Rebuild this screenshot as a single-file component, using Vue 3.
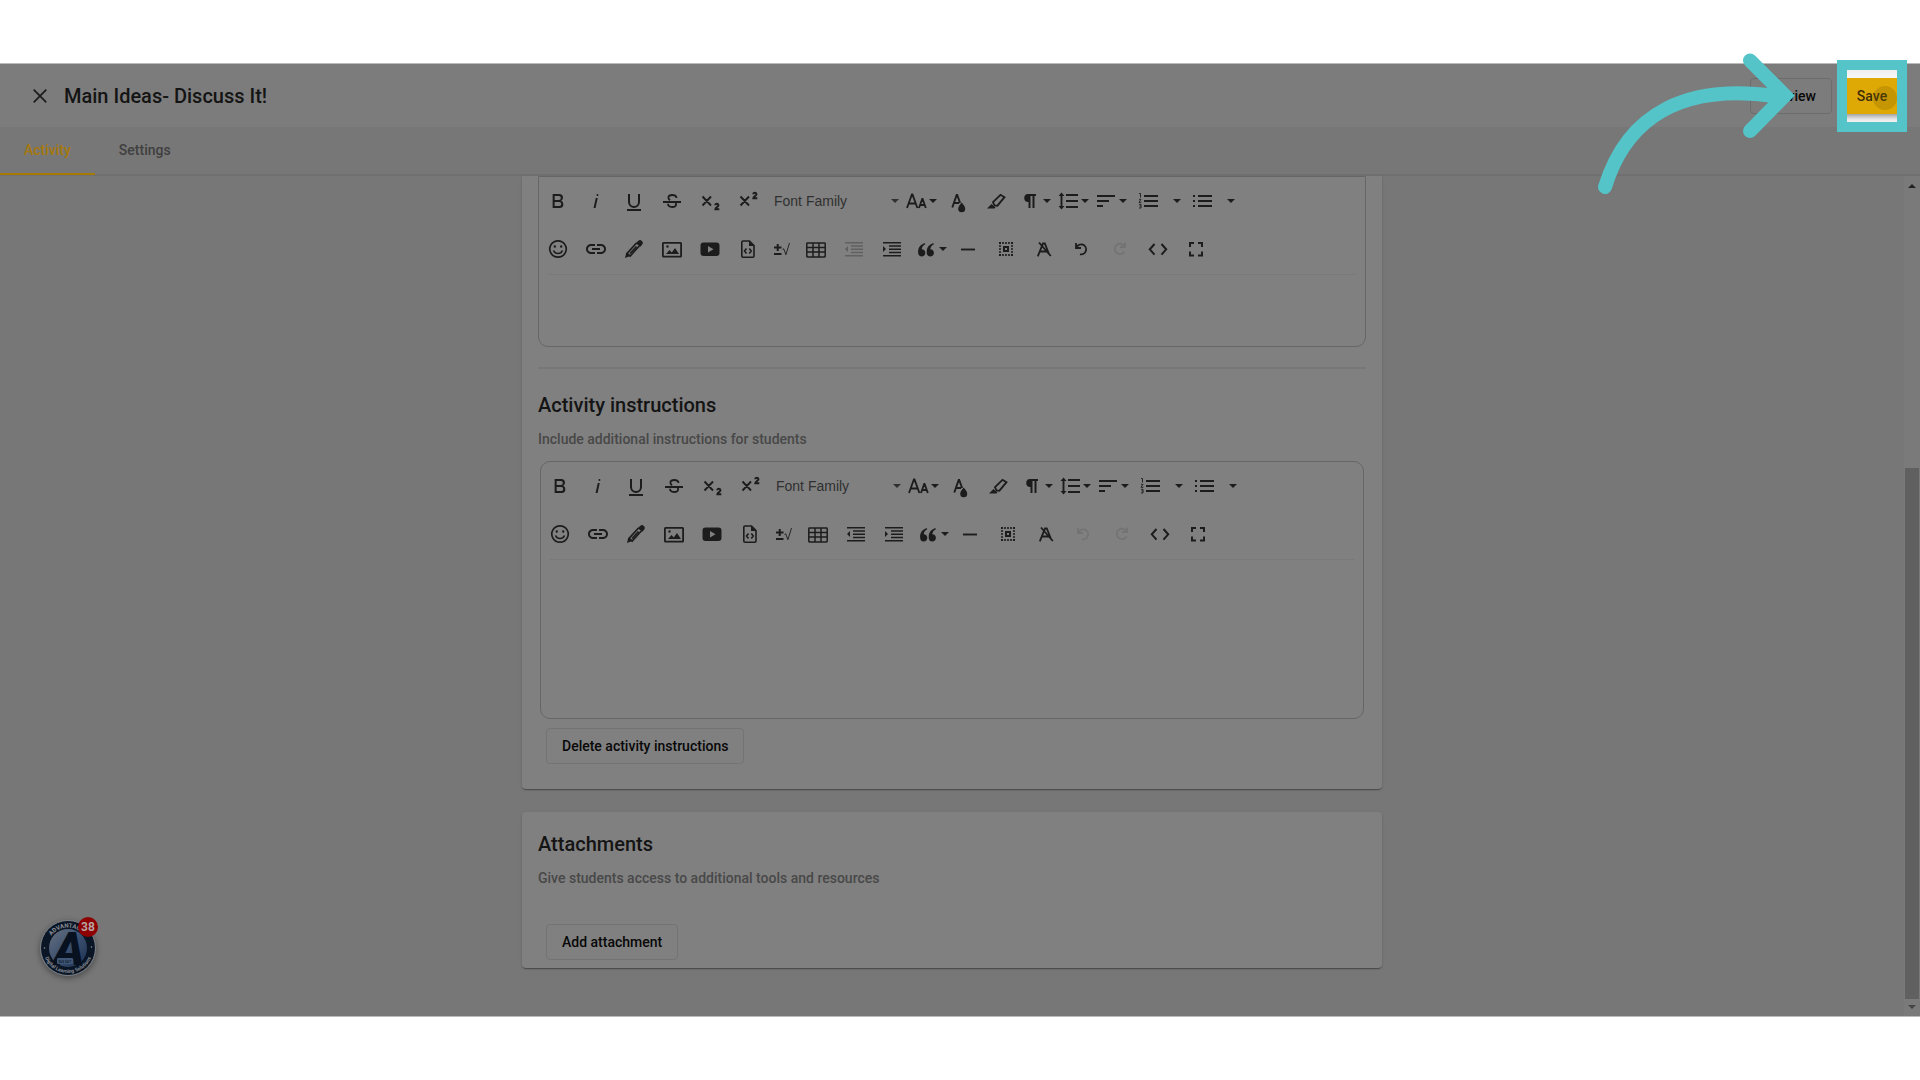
<script setup>
import { ref } from 'vue';

const activeTab = ref('Activity');
const tabs = ['Activity', 'Settings'];

// f = filled path, s = stroked path, w = stroke width
const icons = {
    bold: { f: 'M15.25 11.8A3.68 3.68 0 0 0 17 9a3.93 3.93 0 0 0-3.86-4H6.65v14h7a3.74 3.74 0 0 0 3.7-3.78a3.64 3.64 0 0 0-2.1-3.42zM8.65 7h4.2a2 2 0 0 1 0 4h-4.2zM13.25 17h-4.6v-4h4.6a2 2 0 0 1 0 4z' },
    italic: { f: 'M11.76 9h2l-2.2 10h-2zM13.44 5a1 1 0 1 0 1 1a1 1 0 0 0-1-1z' },
    underline: { s: 'M7 5v8a5 5 0 0 0 10 0V5M5 21h14', w: 2 },
    strike: { s: 'M3 13h18M16.5 9C16.4 7 14.8 6 12.2 6C9.8 6 8.4 7.2 8.4 8.8c0 1 .6 1.8 1.6 2.4M8 14.8c0 2 1.8 3.2 4.2 3.2s3.9-1.1 3.9-2.8c0-.7-.2-1.2-.6-1.7', w: 1.8 },
    sub: { s: 'M4.5 7.5l8.5 9M13 7.5l-8.5 9M17.3 16.2c0-2 3.2-1.7 3.2 0c0 1.3-3.2 2.3-3.2 4h4', w: 1.9 },
    sup: { s: 'M4.5 7.5l8.5 9M13 7.5l-8.5 9M17.3 5.2c0-2 3.2-1.7 3.2 0c0 1.3-3.2 2.3-3.2 4h4', w: 1.9 },
    size: { s: 'M3 19L7.9 5.5h.6L13.4 19M4.8 14.5h6.8M15 19l3.2-9h.4l3.2 9M16.3 16h4.2', w: 1.8 },
    color: { f: 'M15.7 13.5c2 2.5 3.5 4.3 3.5 6.2a3.5 3.5 0 0 1-7 0c0-1.9 1.5-3.7 3.5-6.2z', s: 'M6.3 18.5L10.7 6h.5l2.9 8M8 14h5', w: 1.9 },
    marker: { f: 'M3 19.5l4.5-4.5l4 3.5l-1 1z', s: 'M9 13.2L16.5 5.8l4 2.4L13.4 16.7L10.5 16.5z', w: 1.8 },
    paragraph: { f: 'M10 5h8v2h-1.5v12h-2V7H12.5v12h-2v-6A4 4 0 0 1 10 5z' },
    lineHeight: { f: 'M5.5 3.5l3 3.5h-6zM5.5 20.5l3-3.5h-6z', s: 'M5.5 6v12M10 6h12M10 12h12M10 18h12', w: 1.9 },
    align: { s: 'M3 7h18M3 12h12M3 17h6', w: 2 },
    ol: { s: 'M8 7h14M8 12h14M8 17h14', w: 2, x: 'M3 4.5h1.5v4M3 10.3h2l-2 3h2.4M3 15.3h2v3.700H3M3.5 17h1.500' },
    ul: { s: 'M8 7h14M8 12h14M8 17h14M3 7h2M3 12h2M3 17h2', w: 2 },
    smile: { f: 'M7.6 9.5a1.2 1.2 0 1 0 2.4 0a1.2 1.2 0 1 0-2.4 0M14 9.5a1.2 1.2 0 1 0 2.4 0a1.2 1.2 0 1 0-2.4 0', s: 'M12 3.8a8.2 8.2 0 1 0 .01 0M7.5 13.5c1.8 4 7.2 4 9 0', w: 1.7 },
    link: { f: 'M3.9 12c0-1.71 1.39-3.1 3.1-3.1h4V7H7c-2.76 0-5 2.24-5 5s2.24 5 5 5h4v-1.9H7c-1.71 0-3.1-1.39-3.1-3.1zM8 13h8v-2H8v2zm9-6h-4v1.9h4c1.71 0 3.1 1.39 3.1 3.1s-1.39 3.1-3.1 3.1h-4V17h4c2.76 0 5-2.24 5-5s-2.24-5-5-5z' },
    pencil: { f: 'M15.5 4.5c1.2-1.3 2.3-1.9 3.6-1c1.6 1 2.3 2.4 1.2 4l-2 2.3l-4.6-3.6zM3 21l1.3-5.3l4 3.3z', s: 'M14.5 6L5 16.3l3.2 2.7l9.5-10.5M8 16.5l6.5-7', w: 1.7 },
    image: { f: 'M6 17l3.5-4l2.3 2.5L15 11l4 6zM6.3 9.5a1.2 1.2 0 1 0 2.4 0a1.2 1.2 0 1 0-2.4 0', s: 'M3.5 5.9h17c.4 0 .6.2.6.6v12.5c0 .4-.2.6-.6.6h-17c-.4 0-.6-.2-.6-.6V6.5c0-.4.2-.6.6-.6z', w: 1.8 },
    video: { f: 'M5.5 5.5h13a3 3 0 0 1 3 3v7.5a3 3 0 0 1-3 3h-13a3 3 0 0 1-3-3V8.5a3 3 0 0 1 3-3zM10 9v6.5l5.5-3.25z' },
    file: { f: 'M13 4l5 5h-5z', s: 'M7 4h6.5l4.5 4.5V19c0 .8-.4 1.2-1.2 1.2H7c-.8 0-1.2-.4-1.2-1.2V5.2C5.8 4.4 6.2 4 7 4zM10.5 11.5L8.5 14l2 2.5M13.3 11.5l2 2.5l-2 2.5', w: 1.6 },
    math: { s: 'M4 10.5h7.5M7.7 7v7M4 17h7.5', w: 2, x: 'M12.5 12.5l1.2-.8l2.2 6L19.5 6' },
    table: { s: 'M3.5 6h17q.7 0 .7.7v12.6q0 .7-.7.7h-17q-.7 0-.7-.7V6.7q0-.7.7-.7zM3 10.5h18M3 15h18M9 6v14M15 6v14', w: 1.5 },
    outdent: { f: 'M6 9v6l-3-3z', s: 'M3 5.7h18M9 9h12M9 12.2h12M9 15.5h12M3 18.8h18', w: 1.6 },
    indent: { f: 'M3 9v6l3-3z', s: 'M3 5.7h18M9 9h12M9 12.2h12M9 15.5h12M3 18.8h18', w: 1.6 },
    quote: { f: 'M10.8 6l.4 1.3C9 8.6 8 10 7.7 12.2c2.2 0 3.6 1.5 3.6 3.6c0 2.2-1.5 3.7-3.6 3.7c-2.3 0-3.6-1.6-3.6-4.6C4.1 10.5 6.5 7.5 10.8 6zM19.4 6l.4 1.3c-2.2 1.3-3.2 2.7-3.5 4.9c2.2 0 3.6 1.5 3.6 3.6c0 2.2-1.5 3.7-3.6 3.7c-2.3 0-3.6-1.6-3.6-4.6C12.7 10.5 15.1 7.5 19.4 6z' },
    line: { s: 'M5 12.5h14', w: 1.9 },
    selectAll: { f: 'M5 5h2v2H5zM8.2 5h1.6v2H8.2zM11.2 5h1.6v2h-1.6zM14.2 5h1.6v2h-1.6zM17 5h2v2h-2zM5 8.2h2v1.6H5zM5 11.2h2v1.6H5zM5 14.2h2v1.6H5zM5 17h2v2H5zM8.2 17h1.6v2H8.2zM11.2 17h1.6v2h-1.6zM14.2 17h1.6v2h-1.6zM17 17h2v2h-2zM17 8.2h2v1.6h-2zM17 11.2h2v1.6h-2zM17 14.2h2v1.6h-2z', s: 'M10 10h4v4h-4z', w: 2 },
    clear: { s: 'M5.8 19.3L11 6.5h1.8L17 17M8 14.5h7M7 5.5L18.8 19', w: 1.8 },
    undo: { s: 'M6 6v5h5M6.5 10.5A5 5 0 1 1 10 17.3', w: 1.8 },
    redo: { s: 'M17 5.5V10h-5M16.6 9.5A5.2 5.2 0 1 0 16.5 14.5', w: 1.8 },
    code: { s: 'M8.5 7L3.8 12.3l4.7 5.3M15.5 7l4.7 5.3l-4.7 5.3', w: 2 },
    full: { s: 'M6 10V6h4M14 6h4v4M18 14.5v4h-4M10 18.5H6v-4', w: 2 },
};

const rowOne = [
    { icon: 'bold', label: 'Bold' },
    { icon: 'italic', label: 'Italic' },
    { icon: 'underline', label: 'Underline' },
    { icon: 'strike', label: 'Strikethrough' },
    { icon: 'sub', label: 'Subscript' },
    { icon: 'sup', label: 'Superscript' },
    { text: 'Font Family', label: 'Font Family', drop: true },
    { icon: 'size', label: 'Font Size', drop: true },
    { icon: 'color', label: 'Text Color' },
    { icon: 'marker', label: 'Background Color' },
    { icon: 'paragraph', label: 'Paragraph Format', drop: true },
    { icon: 'lineHeight', label: 'Line Height', drop: true },
    { icon: 'align', label: 'Align', drop: true },
    { icon: 'ol', label: 'Ordered List' },
    { caret: true, label: 'Ordered List options' },
    { icon: 'ul', label: 'Unordered List' },
    { caret: true, label: 'Unordered List options' },
];

const rowTwo = [
    { icon: 'smile', label: 'Emoticons' },
    { icon: 'link', label: 'Insert Link' },
    { icon: 'pencil', label: 'Draw' },
    { icon: 'image', label: 'Insert Image' },
    { icon: 'video', label: 'Insert Video' },
    { icon: 'file', label: 'Embed File' },
    { icon: 'math', label: 'Math', narrow: true },
    { icon: 'table', label: 'Insert Table' },
    { icon: 'outdent', label: 'Decrease Indent' },
    { icon: 'indent', label: 'Increase Indent' },
    { icon: 'quote', label: 'Quote', drop: true },
    { icon: 'line', label: 'Horizontal Line' },
    { icon: 'selectAll', label: 'Select All' },
    { icon: 'clear', label: 'Clear Formatting' },
    { icon: 'undo', label: 'Undo' },
    { icon: 'redo', label: 'Redo' },
    { icon: 'code', label: 'Code View' },
    { icon: 'full', label: 'Fullscreen' },
];

const editors = [
    { id: 'details', label: 'Activity details', muted: ['outdent'], off: ['redo'] },
    { id: 'instructions', label: 'Activity instructions', muted: [], off: ['undo', 'redo'] },
];

function toolClass(tool, editor) {
    return {
        drop: tool.drop,
        family: tool.text,
        split: tool.caret,
        narrow: tool.narrow,
        muted: editor.muted.includes(tool.icon),
        off: editor.off.includes(tool.icon),
    };
}
</script>

<template>
    <div class="page">
        <div class="app">
            <header class="topbar">
                <button class="close" aria-label="Close">
                    <svg width="14" height="14" viewBox="0 0 14 14"><path d="M.7.7l12.6 12.6M13.3.7L.7 13.3" fill="none" stroke="currentColor" stroke-width="1.7" /></svg>
                </button>
                <h1>Main Ideas- Discuss It!</h1>
                <button class="outlined preview">Preview</button>
                <div class="spotlight">
                    <button class="save">Save</button>
                    <span class="click-dot"></span>
                </div>
            </header>

            <nav class="tabs">
                <button v-for="tab in tabs" :key="tab" :class="{ active: activeTab === tab }" @click="activeTab = tab">
                    {{ tab }}
                </button>
            </nav>

            <div class="body">
                <main class="content">
                    <section class="card first">
                        <template v-for="(editor, index) in editors" :key="editor.id">
                            <template v-if="index === 1">
                                <hr>
                                <h2>Activity instructions</h2>
                                <p>Include additional instructions for students</p>
                            </template>
                            <div class="editor" :class="editor.id">
                                <div class="toolbar">
                                    <div v-for="(row, r) in [rowOne, rowTwo]" :key="r" class="tool-row">
                                        <button v-for="tool in row" :key="tool.label" class="tool" :class="toolClass(tool, editor)" :aria-label="tool.label">
                                            <span v-if="tool.text">{{ tool.text }}</span>
                                            <svg v-if="tool.icon" class="icon" viewBox="0 0 24 24">
                                                <path v-if="icons[tool.icon].f" :d="icons[tool.icon].f" fill="currentColor" fill-rule="evenodd" />
                                                <path v-if="icons[tool.icon].s" :d="icons[tool.icon].s" fill="none" stroke="currentColor" :stroke-width="icons[tool.icon].w" />
                                                <path v-if="icons[tool.icon].x" :d="icons[tool.icon].x" fill="none" stroke="currentColor" stroke-width="0.9" />
                                            </svg>
                                            <i v-if="tool.drop || tool.caret" class="caret"></i>
                                        </button>
                                    </div>
                                </div>
                                <textarea :aria-label="editor.label"></textarea>
                            </div>
                        </template>
                        <button class="outlined inset">Delete activity instructions</button>
                    </section>

                    <section class="card second">
                        <h2>Attachments</h2>
                        <p>Give students access to additional tools and resources</p>
                        <button class="outlined inset">Add attachment</button>
                    </section>
                </main>

                <div class="scrollbar">
                    <i class="up"></i>
                    <div class="track"><div class="thumb"></div></div>
                    <i class="down"></i>
                </div>
            </div>

            <button class="launcher" aria-label="Help center">
                <svg width="56" height="56" viewBox="0 0 56 56">
                    <defs>
                        <linearGradient id="disc" x1="0" y1="0" x2="1" y2="1">
                            <stop offset="0" stop-color="#68717e" />
                            <stop offset="0.5" stop-color="#3b5070" />
                            <stop offset="1" stop-color="#1d2f4d" />
                        </linearGradient>
                        <path id="arcTop" d="M7.5 28a20.5 20.5 0 0 1 41 0" />
                        <path id="arcBottom" d="M3 28a25 25 0 0 0 50 0" />
                    </defs>
                    <circle cx="28" cy="28" r="27.5" fill="#0a1626" stroke="#7d8287" />
                    <circle cx="28" cy="28" r="19" fill="url(#disc)" />
                    <text x="29" y="45" class="logo-letter">A</text>
                    <rect x="17" y="38" width="16" height="6" rx="1" fill="#3f5677" />
                    <text x="25" y="43" class="logo-small">DLS 24/7</text>
                    <text class="logo-ring"><textPath href="#arcTop" startOffset="50%">ADVANTAGES</textPath></text>
                    <text class="logo-ring low"><textPath href="#arcBottom" startOffset="50%">Digital Learning Solutions</textPath></text>
                    <circle cx="4.5" cy="28" r="0.8" fill="#8a8f96" />
                    <circle cx="51.5" cy="27" r="0.8" fill="#8a8f96" />
                </svg>
                <span class="badge">38</span>
            </button>

            <svg class="arrow" width="240" height="160" viewBox="0 0 240 160">
                <path d="M25 147C48 72 108 44 195 56M170 20.5L205 55.5L170 91" fill="none" stroke="#54c4c8" stroke-width="14" stroke-linecap="round" />
            </svg>
        </div>
    </div>
</template>

<style>
body {
    margin: 0;
    background: #fff;
}
</style>

<style scoped>
* {
    box-sizing: border-box;
}

.page {
    min-height: 100vh;
    padding: 63px 0;
    background: #fff;
    font-family: Roboto, "Liberation Sans", sans-serif;
    color: #141414;
}

button {
    font-family: inherit;
    font-weight: 500;
    font-size: 14px;
    padding: 0;
    border: 0;
    background: none;
    color: #080808;
    cursor: pointer;
}

.app {
    position: relative;
    display: flex;
    flex-direction: column;
    min-height: calc(100vh - 126px);
    border: solid #bbb;
    border-width: 1px 0;
    background: #777;
}

.topbar {
    display: flex;
    align-items: center;
    height: 63px;
    padding: 0 13px 0 32px;
    background: #7c7c7c;
}

.close {
    display: flex;
    margin-right: 16px;
    padding: 1px;
    color: #1c1c1c;
}

h1, h2 {
    margin: 0;
    font-size: 20px;
    font-weight: 500;
    line-height: 32px;
}

h1 {
    flex: 1;
}

.outlined {
    height: 36px;
    padding: 0 15px;
    border: 1px solid #737373;
    border-radius: 4px;
}

.preview {
    border-color: #6c6c6c;
}

.spotlight {
    position: relative;
    z-index: 2;
    display: flex;
    align-items: center;
    flex: none;
    width: 70px;
    height: 72px;
    margin-left: 5px;
    border: 10px solid #54c4c8;
    background: linear-gradient(#eee, #f8f8f8 16%, #f8f8f8 80%, #999 83%, #e4e4e4 94%, #f2f2f2);
}

.save {
    width: 50px;
    height: 36px;
    background: #dfa905;
    color: #3d2f08;
}

.click-dot {
    position: absolute;
    top: 16px;
    right: 0;
    width: 24px;
    height: 24px;
    border-radius: 50%;
    background: rgba(120, 90, 0, 0.25);
}

.tabs {
    display: flex;
    height: 49px;
    border-bottom: 2px solid #707070;
}

.tabs button {
    height: 48px;
    padding: 0 24px;
    border-bottom: 2px solid transparent;
    color: #404040;
}

.tabs .active {
    border-color: #a67a00;
    color: #a6780c;
}

.body {
    display: flex;
    flex: 1;
}

.content {
    flex: 1;
    padding: 0 16px 48px;
}

.card {
    max-width: 860px;
    margin: 0 auto;
    padding: 16px;
    border-radius: 4px;
    background: #808080;
    box-shadow: 0 2px 1px -1px rgba(0, 0, 0, 0.2), 0 1px 1px rgba(0, 0, 0, 0.14), 0 1px 3px rgba(0, 0, 0, 0.12);
}

.first {
    padding-top: 0;
    padding-bottom: 25px;
    border-radius: 0 0 4px 4px;
}

.second {
    margin-top: 23px;
    padding-bottom: 8px;
}

.card p {
    margin: 8px 0 12px;
    font-size: 14px;
    font-weight: 500;
    line-height: 20px;
    color: #484848;
}

.second p {
    margin-bottom: 36px;
}

.card hr {
    margin: 20px 0;
    border: 0;
    border-top: 2px solid #777;
}

.inset {
    display: block;
    margin-left: 8px;
}

.editor {
    display: flex;
    flex-direction: column;
    border: 1px solid #666;
    border-radius: 10px;
}

.details {
    height: 171px;
    border-radius: 0 0 10px 10px;
}

.instructions {
    height: 258px;
    margin: 0 2px 9px;
}

.toolbar {
    display: flex;
    flex-direction: column;
    gap: 1px;
}

.toolbar::after {
    content: "";
    margin: 1px 9px 0;
    border-bottom: 1px solid #797979;
}

.tool-row {
    display: flex;
    align-items: center;
    height: 47px;
}

.tool {
    display: flex;
    align-items: center;
    justify-content: center;
    flex: none;
    width: 38px;
    height: 38px;
    color: #1c1c1c;
}

.drop {
    justify-content: space-between;
    padding: 0 2px 0 3px;
}

.family {
    width: 134px;
    padding-left: 7px;
    font-family: "Liberation Sans", sans-serif;
    font-weight: 400;
    color: #303030;
}

.split {
    width: 16px;
    padding-left: 4px;
}

.narrow {
    width: 30px;
}

.muted {
    color: #606060;
}

.off {
    color: #737373;
}

.icon {
    flex: none;
    width: 24px;
    height: 24px;
}

.caret {
    flex: none;
    border: 4px solid transparent;
    border-top-color: currentColor;
    border-bottom: 0;
}

textarea {
    flex: 1;
    width: 100%;
    padding: 8px 16px;
    border: 0;
    outline: 0;
    background: transparent;
    resize: none;
    font: 14px "Liberation Sans", sans-serif;
}

.scrollbar {
    display: flex;
    flex-direction: column;
    align-items: center;
    width: 16px;
    padding: 8px 0 7px;
    background: #7a7a7a;
}

.track {
    display: flex;
    flex-direction: column;
    justify-content: flex-end;
    flex: 1;
    padding: 6px 0;
}

.thumb {
    width: 14px;
    height: 66%;
    background: #606060;
}

.up, .down {
    border: 4px solid transparent;
}

.up {
    border-top: 0;
    border-bottom-color: #222;
}

.down {
    border-bottom: 0;
    border-top-color: #444;
}

.launcher {
    position: absolute;
    left: 40px;
    bottom: 40px;
    width: 56px;
    height: 56px;
    border-radius: 50%;
    box-shadow: 0 2px 6px rgba(0, 0, 0, 0.4);
}

.logo-letter {
    font: italic 900 47px Roboto, sans-serif;
    text-anchor: middle;
    fill: #07111f;
}

.logo-small {
    font: 700 3px Roboto, sans-serif;
    text-anchor: middle;
    fill: #121c2b;
}

.logo-ring {
    font: 700 6px Roboto, sans-serif;
    text-anchor: middle;
    fill: #8a8f96;
}

.low {
    font-size: 5px;
}

.badge {
    position: absolute;
    top: -3px;
    right: -2px;
    width: 20px;
    height: 20px;
    border-radius: 50%;
    background: #8e0000;
    color: #b5a5a5;
    font-size: 12px;
    font-weight: 700;
    line-height: 20px;
}

.arrow {
    position: absolute;
    top: -24px;
    right: 100px;
    z-index: 3;
    pointer-events: none;
}
</style>
